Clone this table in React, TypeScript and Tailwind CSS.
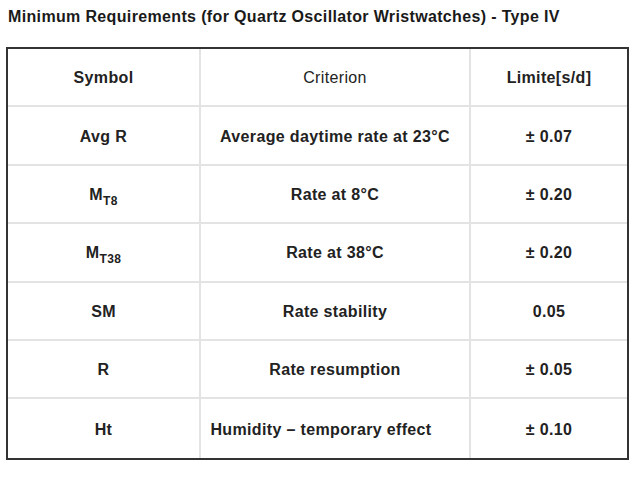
import React from "react";

type Row = { sym: React.ReactNode; crit: string; lim: string; shift?: boolean };

const Sub = ({ base, sub }: { base: string; sub: string }) => (
  <span>
    {base}
    <sub className="text-[12px] align-baseline relative top-[5px]">{sub}</sub>
  </span>
);

const rows: Row[] = [
  { sym: "Avg R", crit: "Average daytime rate at 23°C", lim: "± 0.07" },
  { sym: <Sub base="M" sub="T8" />, crit: "Rate at 8°C", lim: "± 0.20" },
  { sym: <Sub base="M" sub="T38" />, crit: "Rate at 38°C", lim: "± 0.20" },
  { sym: "SM", crit: "Rate stability", lim: "0.05" },
  { sym: "R", crit: "Rate resumption", lim: "± 0.05" },
  { sym: "Ht", crit: "Humidity – temporary effect", lim: "± 0.10", shift: true },
];

export default function App() {
  const cell =
    "flex items-center justify-center h-[58.4px] text-[16px] tracking-[0.35px] font-bold text-[#222]";
  return (
    <div
      className="w-[640px] h-[486px] bg-white pt-[6px] pl-[8px]"
      style={{ fontFamily: '"Liberation Sans", Arial, sans-serif' }}
    >
      <div className="text-[16px] tracking-[0.35px] font-bold text-[#1a1a1a] leading-[22px]">
        Minimum Requirements (for Quartz Oscillator Wristwatches) - Type IV
      </div>
      <div className="mt-[19px] -ml-[2px] w-[623px] border-2 border-[#333]">
        <div className="grid grid-cols-[193px_270px_156px]">
          <div className={`${cell} pt-[2px] border-r-2 border-b-2 border-[#e3e3e3]`}>Symbol</div>
          <div className={`${cell} pt-[2px] border-r-2 border-b-2 border-[#e3e3e3]`}>
            <span className="font-normal">Criterion</span>
          </div>
          <div className={`${cell} pt-[2px] border-b-2 border-[#e3e3e3]`}>Limite[s/d]</div>
          {rows.map((r, i) => {
            const last = i === rows.length - 1;
            const b = last ? "" : "border-b-2";
            return (
              <React.Fragment key={i}>
                <div className={`${cell} pt-[2px] border-r-2 ${b} border-[#e3e3e3]`}>{r.sym}</div>
                <div
                  className={`${cell} pt-[2px] border-r-2 ${b} border-[#e3e3e3] ${
                    r.shift ? "pr-[28px]" : ""
                  }`}
                >
                  {r.crit}
                </div>
                <div className={`${cell} pt-[2px] ${b} border-[#e3e3e3]`}>{r.lim}</div>
              </React.Fragment>
            );
          })}
        </div>
      </div>
    </div>
  );
}
